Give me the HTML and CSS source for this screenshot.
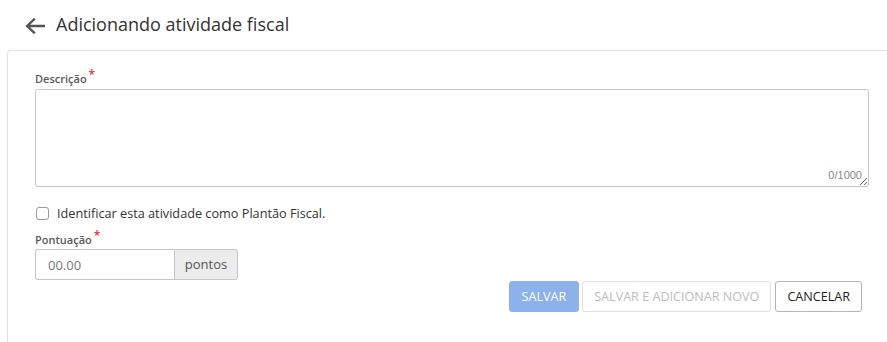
FILE: index.html
```html
<!DOCTYPE html>
<html lang="pt">
<head>
<meta charset="utf-8">
<title>Adicionando atividade fiscal</title>
<link rel="stylesheet" href="styles.css">
</head>
<body>
<header class="page-header">
  <a class="back" href="#" aria-label="Voltar">
    <svg width="20" height="16" viewBox="0 0 20 16"><path d="M19 8H2.5M9 1.5 2.2 8 9 14.5" fill="none" stroke="#555" stroke-width="2.4" stroke-linecap="square"/></svg>
  </a>
  <h1 class="title">Adicionando atividade fiscal</h1>
</header>
<main class="card">
  <div class="field">
    <label class="label">Descrição<span class="req">*</span></label>
    <div class="textarea-wrap">
      <textarea class="textarea"></textarea>
      <span class="counter">0/1000</span>
    </div>
  </div>
  <label class="check-row">
    <span class="checkbox"></span>
    <span class="check-text">Identificar esta atividade como Plantão Fiscal.</span>
  </label>
  <div class="field field-points">
    <label class="label">Pontuação<span class="req">*</span></label>
    <div class="input-group">
      <input class="input" type="text" placeholder="00.00">
      <span class="addon">pontos</span>
    </div>
  </div>
  <div class="actions">
    <button class="btn btn-primary">SALVAR</button>
    <button class="btn btn-disabled">SALVAR E ADICIONAR NOVO</button>
    <button class="btn btn-default">CANCELAR</button>
  </div>
</main>
</body>
</html>
```
FILE: styles.css
```css
html, body {
  margin: 0;
  padding: 0;
  background: #fff;
  height: 100%;
}
body {
  font-family: "Open Sans", "Noto Sans", sans-serif;
  color: #333;
  display: flex;
  flex-direction: column;
  overflow: hidden;
}
.page-header {
  height: 50px;
  display: flex;
  align-items: center;
  padding-left: 25px;
  gap: 11px;
}
.back {
  display: flex;
  align-items: center;
  margin-top: 1px;
}
.title {
  margin: 0;
  font-size: 18px;
  font-weight: 400;
  color: #333;
  line-height: 24px;
  margin-top: -2px;
}
.card {
  flex: 1;
  margin-left: 7px;
  border-left: 1px solid #e2e2e2;
  border-top: 1px solid #e2e2e2;
  border-top-left-radius: 4px;
  padding: 20px 18px 20px 27px;
}
.field {
  display: flex;
  flex-direction: column;
}
.label {
  font-size: 11px;
  line-height: 15px;
  font-weight: 600;
  color: #5a5a5a;
  margin-bottom: 3px;
}
.req {
  color: #e0333b;
  margin-left: 2px;
  font-size: 12px;
  position: relative;
  top: -4px;
}
.textarea-wrap {
  position: relative;
}
.textarea {
  display: block;
  box-sizing: border-box;
  width: 100%;
  height: 98px;
  border: 1px solid #c6c6c6;
  border-radius: 3px;
  resize: vertical;
  font-family: inherit;
  font-size: 13px;
  padding: 6px 10px;
  margin: 0;
}
.counter {
  position: absolute;
  right: 7px;
  bottom: 6px;
  font-family: "Liberation Sans", Arial, sans-serif;
  font-size: 11px;
  color: #8a8a8a;
}
.check-row {
  display: flex;
  align-items: center;
  gap: 8px;
  margin-top: 17px;
  margin-left: 1px;
}
.checkbox {
  width: 11px;
  height: 11px;
  border: 1px solid #9a9a9a;
  border-radius: 3px;
  background: #fff;
}
.check-text {
  font-size: 12.7px;
  line-height: 18px;
  color: #333;
}
.field-points {
  margin-top: 10px;
}
.field-points .label {
  margin-bottom: 2px;
}
.input-group {
  display: flex;
  width: 203px;
  height: 31px;
}
.input {
  box-sizing: border-box;
  width: 139px;
  height: 100%;
  border: 1px solid #c6c6c6;
  border-right: none;
  border-radius: 3px 0 0 3px;
  font-family: inherit;
  font-size: 13px;
  padding: 0 12px;
  margin: 0;
  color: #333;
}
.input::placeholder {
  color: #777;
}
.addon {
  box-sizing: border-box;
  flex: 1;
  display: flex;
  align-items: center;
  justify-content: center;
  background: #ececec;
  border: 1px solid #c6c6c6;
  border-radius: 0 3px 3px 0;
  font-size: 13px;
  color: #555;
  padding-bottom: 2px;
}
.actions {
  display: flex;
  justify-content: flex-end;
  gap: 3px;
  padding-right: 7px;
  margin-top: 1px;
}
.btn {
  box-sizing: border-box;
  height: 31px;
  padding: 0 11px;
  font-family: inherit;
  font-size: 12.6px;
  border-radius: 3px;
  background: #fff;
  cursor: pointer;
}
.btn-primary {
  background: #8cb1eb;
  border: 1px solid #8cb1eb;
  color: #fff;
  padding: 0 12px;
}
.btn-disabled {
  border: 1px solid #e0e0e0;
  color: #bdbdbd;
}
.btn-default {
  border: 1px solid #b5b5b5;
  color: #222;
  margin-left: 1px;
}
```
